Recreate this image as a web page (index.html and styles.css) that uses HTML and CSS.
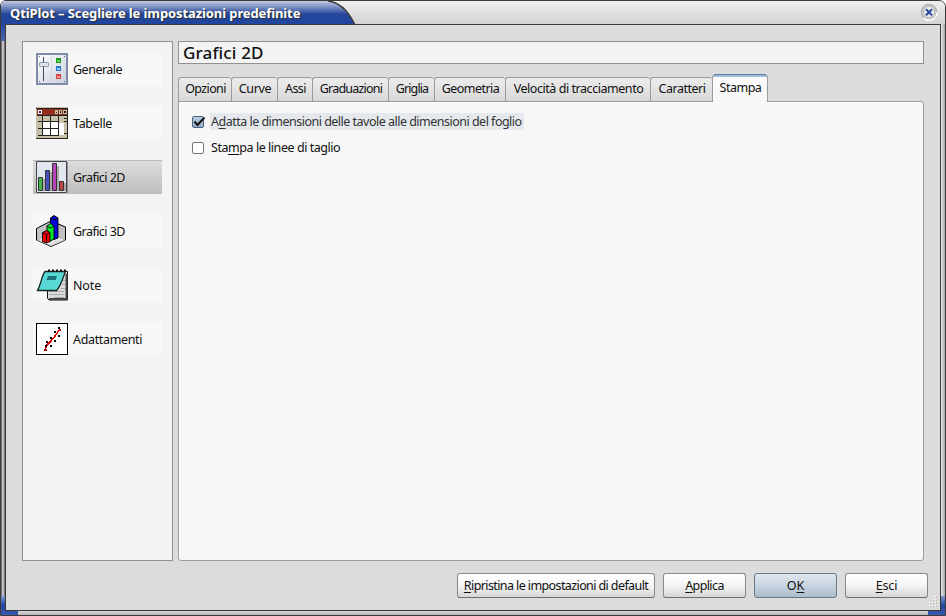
FILE: index.html
```html
<!DOCTYPE html>
<html lang="it">
<head>
<meta charset="utf-8">
<title>QtiPlot</title>
<link rel="stylesheet" href="styles.css">
</head>
<body>
<div class="window">
  <header class="titlebar">
    <svg class="title-shape" width="356" height="24" viewBox="0 0 356 24"><defs><linearGradient id="tb" x1="0" y1="0" x2="0" y2="1"><stop offset="0" stop-color="#c3cbe2"/><stop offset=".2" stop-color="#8b9bca"/><stop offset=".55" stop-color="#23459a"/><stop offset="1" stop-color="#2146a0"/></linearGradient></defs><path d="M0 0H328C343 2 350 14 355 24H0Z" fill="url(#tb)"/><path d="M328 0C343 2 350 14 355 24" fill="none" stroke="#3c3a38" stroke-width="1.5"/></svg>
    <h1 class="title">QtiPlot – Scegliere le impostazioni predefinite</h1>
    <svg class="close" width="18" height="18" viewBox="0 0 18 18"><circle cx="9" cy="9" r="7.500" fill="#d9d9d9" stroke="#b0b0b0" stroke-width="1.500"/><path d="M3.500 15A8 8 0 0 0 17 9" fill="none" stroke="#fff" stroke-width="1.500"/><circle cx="9" cy="9" r="5.500" fill="#ededed" stroke="#999" stroke-width=".6"/><path d="M6 6.200l6 6M12 6.200l-6 6" stroke="#2e51a5" stroke-width="2.200"/></svg>
  </header>
  <div class="frame">
    <main class="dialog">
      <div class="columns">
        <nav class="list">
          <div class="item"><svg width="32" height="32" viewBox="0 0 32 32"><defs><linearGradient id="g1" x2="1" y2="1"><stop stop-color="#fff"/><stop offset="1" stop-color="#c9cedb"/></linearGradient></defs><rect x="1" y="1" width="30" height="30" fill="url(#g1)" stroke="#7d8ba8" stroke-width="2"/><path d="M15.500 3v26" stroke="#d2d6e0"/><path d="M7.500 4v24" stroke="#3f4a5c"/><rect x="3.500" y="9.500" width="9" height="4" rx="1" fill="#dde2ea" stroke="#8593a8"/><path d="M3 3h1v1H3zM28 3h1v1h-1zM3 28h1v1H3zM28 28h1v1h-1z" fill="#59657a"/><path fill="#1c9a1c" d="M20 5h5v5h-5z"/><path fill="#2878cc" d="M20 13h5v5h-5z"/><path fill="#d14747" d="M20 21h5v5h-5z"/><path fill="#5fd65f" d="M21 7h3v2h-3z"/><path fill="#8accff" d="M21 15h3v2h-3z"/><path fill="#ff9090" d="M21 23h3v2h-3z"/></svg><span class="t t1">Generale</span></div>
          <div class="item"><svg width="32" height="32" viewBox="0 0 32 32" shape-rendering="crispEdges"><path fill="#c5c0a7" d="M0 0h32v32H0z"/><path fill="#222" d="M0 1h32v1H0z"/><path fill="#912f1c" d="M1 2h30v6H1z"/><path fill="#fff" d="M2 3h4v4H2zM7 15h15v13H7zM23 16h5v12h-5z"/><path fill="#1d236e" d="M3 4h2v2H3z"/><path fill="#c5c0a7" d="M19 3h3v4h-3zM23 3h3v4h-3zM27 3h4v4h-4z"/><path fill="#222" d="M20 5h1v1h-1zM24 4h1v2h-1zM28 4h2v2h-2z"/><path fill="#222" d="M0 31h32v1H0zM31 1h1v31h-1zM1 8h30v1H1zM6 9h1v20H6zM14 9h1v20h-1zM22 9h1v20h-1zM2 14h21v1H2zM2 21h21v1H2zM2 28h21v1H2zM28 11h3v1h-3zM28 14h3v1h-3zM28 26h3v1h-3z"/></svg><span class="t t2">Tabelle</span></div>
          <div class="item selected"><svg width="32" height="32" viewBox="0 0 32 32"><path fill="#e1e6ef" stroke="#424448" d="M.5.5h30v31H.5z"/><path fill="#909398" d="M31 1h1v31h-1z"/><path fill="#aaa" d="M7 18h2v12H7zM14 11h2v19h-2zM21 5h2v25h-2zM28 22h2v8h-2z"/><g stroke="#333"><path fill="#43b349" d="M2.500 16.500h4v13h-4z"/><path fill="#454fc0" d="M9.500 9.500h4v20h-4z"/><path fill="#b546b7" d="M16.500 2.500h4v27h-4z"/><path fill="#bd4343" d="M23.500 20.500h4v9h-4z"/></g></svg><span class="t t3">Grafici 2D</span></div>
          <div class="item"><svg width="32" height="32" viewBox="0 0 32 32"><path fill="#c2c2c2" stroke="#000" d="M.5 13.500L15 6l14.500 6v13L15 31.500.5 25z"/><path fill="#e3e3e3" stroke="#888" stroke-width=".5" d="M1 25l14-7 14 7-14 6z"/><g stroke="#000" stroke-width=".9"><path fill="#0000e0" d="M14.500 3l3.500-2.500 4 2.500v20l-4 1.500-3.500-1.500z"/><path fill="#00e92b" d="M11 11l3.500-2.500L18 11v13l-3.500 2-3.500-2z"/><path fill="#f50000" d="M6.500 17.500l4-2 3.500 2v9l-3.500 1.500-4-1.500z"/><path d="M14.500 3l3.500 2 4-2M11 11l3.500 2 3.500-2M6.500 17.500l4 2 3.500-2M10.500 19.500v8" fill="none"/></g></svg><span class="t t4">Grafici 3D</span></div>
          <div class="item"><svg width="32" height="32" viewBox="0 0 32 32"><path fill="#dcdcdc" stroke="#111" d="M11.500 2.500h20v28.500H13l-1.500-1.500z"/><path stroke="#aaa" d="M13 22.500h15M13 25.500h15M18 28.500h10M25 19.500h4M26 15.500h3M27 11.500h2"/><path fill="none" stroke="#444" stroke-width="2" d="M30.500 5v25H13"/><path fill="#58d8d5" stroke="#152525" stroke-width="1.300" d="M9 2.500h20.500C27 8 25 17 20.500 21.500H1.500C5 15 6 6 9 2.500z"/><path fill="#1c6f76" d="M12 7h9l-1.500 4h-9z"/><path stroke="#111" stroke-width="2" stroke-dasharray="2 2" d="M12 1.500h19"/></svg><span class="t t5">Note</span></div>
          <div class="item"><svg width="32" height="32" viewBox="0 0 32 32" shape-rendering="crispEdges"><path fill="#fff" stroke="#000" d="M.5.500h31v31H.5z"/><path fill="none" stroke="#e00000" stroke-width="1.500" d="M9 27l2-5 4-4 4-5 5-7"/><path fill="#000" d="M22 4h2v2h-2zM18 8h2v2h-2zM22 12h2v2h-2zM14 14h2v2h-2zM18 17h2v2h-2zM10 18h2v2h-2zM14 22h2v2h-2zM9 22h2v2H9z"/><path fill="#b00000" d="M8 26h3v2H8zM23 6h2v2h-2z"/></svg><span class="t t6">Adattamenti</span></div>
        </nav>
        <section class="content">
          <h2 class="heading"><span class="t t7">Grafici 2D</span></h2>
          <div class="tabs">
            <div class="tab w1"><span class="t t8">Opzioni</span></div><div class="tab w2"><span class="t t9">Curve</span></div><div class="tab w3"><span class="t t10">Assi</span></div><div class="tab w4"><span class="t t11">Graduazioni</span></div><div class="tab w5"><span class="t t12">Griglia</span></div><div class="tab w6"><span class="t t13">Geometria</span></div><div class="tab w7"><span class="t t14">Velocità di tracciamento</span></div><div class="tab w8"><span class="t t15">Caratteri</span></div><div class="tab active"><span class="t t16">Stampa</span></div>
          </div>
          <div class="panel">
            <label class="check"><span class="box on"><svg width="14" height="12" viewBox="0 0 14 12"><path d="M2.500 5.500L5.500 9 12.500 1.500" fill="none" stroke="#111" stroke-width="2"/></svg></span><span class="label focused"><span class="t t17">A<u>d</u>atta le dimensioni delle tavole alle dimensioni del foglio</span></span></label>
            <label class="check"><span class="box"></span><span class="label"><span class="t t18">Sta<u>m</u>pa le linee di taglio</span></span></label>
          </div>
        </section>
      </div>
      <footer class="buttons">
        <button class="btn wide"><span class="t t19"><u>R</u>ipristina le impostazioni di default</span></button>
        <button class="btn"><span class="t t20"><u>A</u>pplica</span></button>
        <button class="btn default"><span class="t t21">O<u>K</u></span></button>
        <button class="btn"><span class="t t22"><u>E</u>sci</span></button>
      </footer>
      <svg class="grip" width="12" height="12" viewBox="0 0 12 12" shape-rendering="crispEdges"><path fill="#fff" d="M9 0h1v1H9zM9 3h1v1H9zM6 3h1v1H6zM9 6h1v1H9zM6 6h1v1H6zM3 6h1v1H3zM9 9h1v1H9zM6 9h1v1H6zM3 9h1v1H3zM0 9h1v1H0z"/><path fill="#b5b5b5" d="M10 1h1v1h-1zM10 4h1v1h-1zM7 4h1v1H7zM10 7h1v1h-1zM7 7h1v1H7zM4 7h1v1H4zM10 10h1v1h-1zM7 10h1v1H7zM4 10h1v1H4zM1 10h1v1H1z"/></svg>
    </main>
  </div>
</div>
</body>
</html>
```
FILE: styles.css
```css
* { box-sizing: border-box; }
body { margin: 0; font: 12.5px "Noto Sans", sans-serif; color: #111; background: #fff; }
u { text-underline-offset: 2px; text-decoration-thickness: 1px; text-decoration-skip-ink: none; }
.window { width: 946px; height: 616px; border: 1px solid #3c3a38; border-radius: 6px 7px 0 0; overflow: hidden; display: flex; flex-direction: column; background: #d6d6d6; }
.titlebar { height: 23px; display: flex; align-items: center; justify-content: space-between; position: relative; background: linear-gradient(#f0f0f0, #d2d2d2); padding: 0 7px 0 9px; }
.title-shape { position: absolute; left: -1px; top: 0; }
.title { position: relative; margin: 0; font: bold 13px "Noto Sans", sans-serif; letter-spacing: -.1px; color: #fff; white-space: nowrap; text-shadow: 1px 1px 1px #333; }
.close { margin-top: -1px; }
.frame {
  flex: 1; padding: 0 4px 4px;
  background:
    linear-gradient(#2146a0, #4b66b3) 0 0 / 4px 17px no-repeat,
    linear-gradient(#7f97cd, #2146a0 50%, #3c5aae) 0 100% / 17px 19px no-repeat,
    linear-gradient(#7f97cd, #2146a0 50%, #3c5aae) 100% 100% / 17px 19px no-repeat,
    linear-gradient(90deg, #777 1px, #c9c5c8 1px, #b5b1b4 3px, #777 3px) 0 0 / 4px 100% no-repeat,
    linear-gradient(90deg, #e8e8e8, #aaa) 100% 0 / 4px 100% no-repeat,
    linear-gradient(#d9d6da, #b9b6ba) 0 100% / 100% 4px no-repeat;
}
.dialog { position: relative; height: 100%; border: 1px solid #3c3a38; background: #dcdcdc; padding: 16px 12px 0 16px; display: flex; flex-direction: column; }
.columns { display: flex; gap: 5px; height: 520px; }
.list { width: 151px; border: 1px solid #919191; background: #f3f3f3; padding: 10px; display: flex; flex-direction: column; gap: 20px; }
.item { height: 34px; display: flex; align-items: center; gap: 5px; padding-left: 3px; background: #f7f7f7; }
.item.selected { background: linear-gradient(#dedede, #bdbdbd); box-shadow: inset 0 1px #bbb; }
.content { width: 746px; flex: none; }
.heading { margin: 0; height: 23px; border: 1px solid #919191; background: #f3f3f3; padding-left: 4px; font: 500 17px/22px "Noto Sans", sans-serif; }
.tabs { display: flex; align-items: flex-end; height: 38px; margin-bottom: -1px; position: relative; }
.t { white-space: nowrap; }
.tab { height: 25px; padding-left: 1px; border: 1px solid #9c9c9c; border-right: 0; border-radius: 3px 3px 0 0; background: linear-gradient(#ececec, #d9d9d9); text-align: center; line-height: 21px; }
.w1 { width: 53px; }
.w2 { width: 46px; }
.w3 { width: 35px; }
.w4 { width: 76px; }
.w5 { width: 46px; }
.w6 { width: 71px; }
.w7 { width: 145px; }
.w8 { width: 62px; }
.active { width: 56px; height: 28px; border: 1px solid #9c9c9c; border-top: 1px solid #5d7ba3; border-bottom: 0; border-radius: 4px 4px 0 0; background: linear-gradient(#a3bedb 2px, #fbfbfb 2px, #f7f7f7); line-height: 25px; }
.panel { height: 460px; border: 1px solid #9c9c9c; border-radius: 0 3px 3px 3px; background: #f7f7f7; padding: 11px 13px; box-shadow: inset 1px 1px #fdfdfd; }
.check { display: flex; height: 26px; gap: 6px; }
.box { width: 12px; height: 12px; margin-top: 3px; border: 1px solid #777; border-radius: 2px; background: #fff; display: flex; }
.box.on { background: linear-gradient(#b9cde2, #8fadc9); border-color: #4c6482; }
.box svg { flex: none; margin: -1px; }
.label { height: 17px; line-height: 17px; padding: 0 2px 0 1px; }
.focused { background: #e5e9ed; color: #333; }
.buttons { display: flex; gap: 8px; justify-content: flex-end; padding-top: 12px; }
.btn { width: 83px; height: 25px; padding: 0; border: 1px solid #888; border-bottom-color: #6c6c6c; border-radius: 3px; font: inherit; color: inherit; background: linear-gradient(#fff, #f5f5f5 50%, #d6d6d6); }
.wide { width: 198px; }
.default { border-color: #687785; background: linear-gradient(#e0e7ed, #c7d4df 50%, #aabccb); }
.grip { position: absolute; right: 2px; bottom: 2px; }
.t1 { letter-spacing: -.5px; }
.t2 { letter-spacing: -.3px; }
.t3, .t4 { letter-spacing: -.55px; }
.t5 { letter-spacing: -.15px; }
.t6 { letter-spacing: -.35px; }
.t7 { letter-spacing: .15px; }
.t8 { letter-spacing: -.6px; }
.t9 { letter-spacing: -.35px; }
.t10 { letter-spacing: -.5px; }
.t11 { letter-spacing: -.78px; }
.t12 { letter-spacing: -.9px; }
.t13 { letter-spacing: -.55px; }
.t14 { letter-spacing: -.45px; }
.t15 { letter-spacing: -.48px; }
.t16 { letter-spacing: -.5px; }
.t17 { letter-spacing: -.51px; }
.t18 { letter-spacing: -.45px; }
.t19, .t20 { letter-spacing: -.6px; }
.t22 { letter-spacing: -.2px; }
```
